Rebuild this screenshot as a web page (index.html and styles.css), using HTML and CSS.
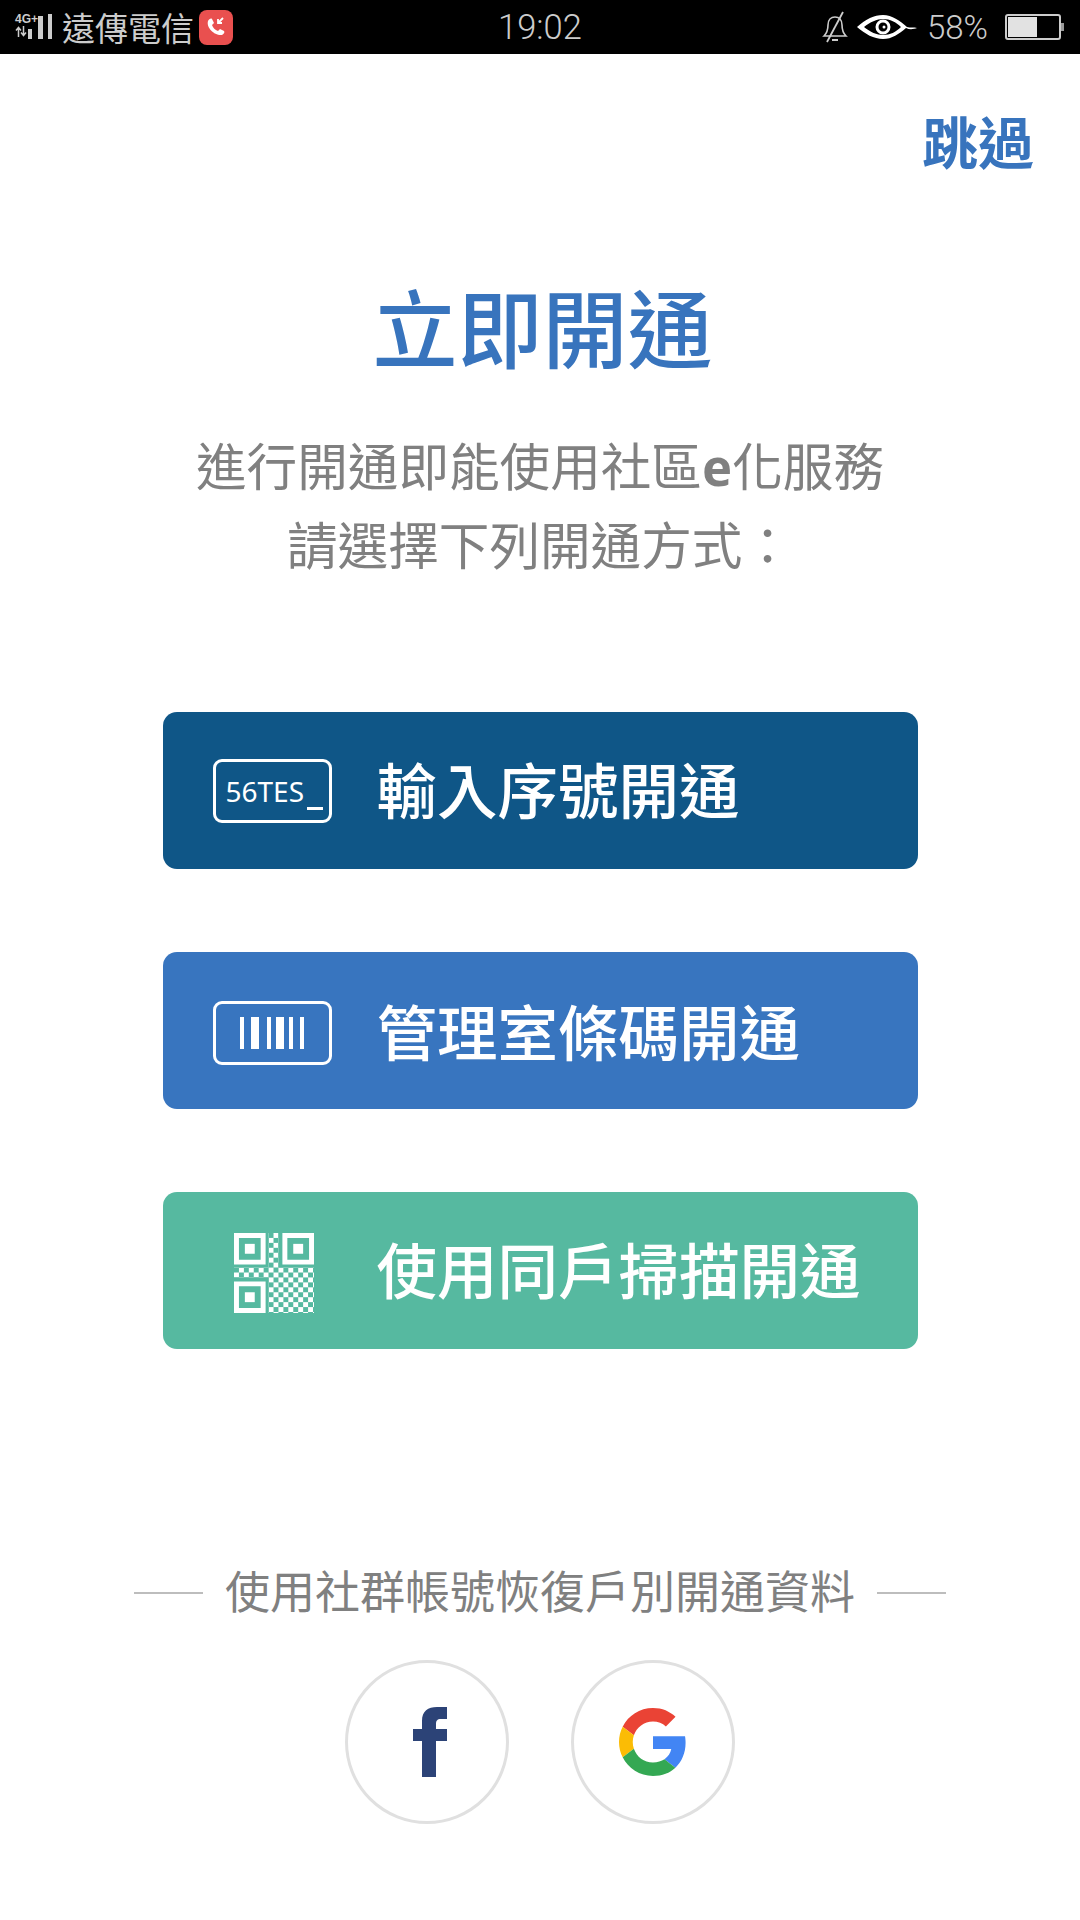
FILE: index.html
```html
<!DOCTYPE html>
<html lang="zh-Hant">
<head>
    <meta charset="UTF-8">
    <meta name="viewport" content="width=device-width, initial-scale=1.0">
    <title>立即開通</title>
    <link rel="stylesheet" href="styles.css">
</head>
<body>
    <div class="status-bar">
        <div class="status-left">
            <div class="signal">
                <div class="signal-type">
                    <span class="signal-4g">4G+</span>
                    <svg class="signal-arrows" width="12" height="11" viewBox="0 0 12 11"><path d="M3.500 11V2M1 4.500l2.500-3 2.500 3M8.500 0v9M6 6.500l2.500 3 2.500-3" fill="none" stroke="#ccc" stroke-width="1.500"/></svg>
                </div>
                <svg class="signal-bars" width="30" height="28" viewBox="0 0 30 28">
                    <rect x="1" y="16" width="4" height="10" fill="#ccc"/>
                    <rect x="11" y="3" width="5" height="23" fill="#ccc"/>
                    <rect x="21" y="1" width="4" height="25" fill="#ccc"/>
                </svg>
            </div>
            <span class="carrier">遠傳電信</span>
            <span class="call-badge">
                <svg width="28" height="28" viewBox="0 0 28 28">
                    <path d="M6 8c1-2 3-3 4-2l2 4-2 2c1 3 3 5 6 6l2-2 4 2c1 1 0 3-2 4-7 1-16-7-14-14z" fill="#fff"/>
                    <path d="M21 5l-5 5M16 6v4h4" fill="none" stroke="#fff" stroke-width="1.800"/>
                </svg>
            </span>
        </div>
        <div class="status-time">19:02</div>
        <div class="status-right">
            <svg class="bell" width="26" height="32" viewBox="0 0 26 32">
                <path d="M2 25c3-3 4-6 4-11 0-5 3-8 7-8s7 3 7 8c0 5 1 8 4 11z" fill="none" stroke="#ccc" stroke-width="1.600"/>
                <path d="M10 29h6" stroke="#ccc" stroke-width="2"/>
                <path d="M21 1L5 31" stroke="#ccc" stroke-width="1.800"/>
            </svg>
            <svg class="eye" width="62" height="28" viewBox="0 0 62 28">
                <path d="M1 14C10 6 18 2 27 2c9 0 17 6 24 12 3 1 7 0 10 1-3 1-7 2-11 0-7 6-14 11-23 11C18 26 9 21 1 14zM8 14c6 5 13 8 19 8 7 0 13-3 18-8-5-5-11-8-18-8-6 0-13 3-19 8z" fill="#fff" fill-rule="evenodd"/>
                <circle cx="27" cy="14" r="6" fill="none" stroke="#fff" stroke-width="3"/>
                <circle cx="28" cy="14" r="1.500" fill="#fff"/>
            </svg>
            <span class="battery-text">58%</span>
            <div class="battery">
                <div class="battery-body"><div class="battery-fill"></div></div>
                <div class="battery-tip"></div>
            </div>
        </div>
    </div>

    <div class="page">
        <div class="skip">跳過</div>
        <h1 class="title">立即開通</h1>
        <p class="intro">進行開通即能使用社區<b>e</b>化服務<br>請選擇下列開通方式：</p>

        <div class="options">
            <div class="option option-serial">
                <div class="option-icon">
                    <div class="code-box"><span class="code-text">56TES</span><span class="code-cursor"></span></div>
                </div>
                <span class="option-label">輸入序號開通</span>
            </div>
            <div class="option option-barcode">
                <div class="option-icon">
                    <div class="code-box code-box-bar">
                        <svg width="65" height="32" viewBox="0 0 65 32" fill="#fff">
                            <rect x="0" y="0" width="4" height="32"/>
                            <rect x="11" y="0" width="8" height="32"/>
                            <rect x="27" y="0" width="4" height="32"/>
                            <rect x="36" y="0" width="8" height="32"/>
                            <rect x="49" y="0" width="4" height="32"/>
                            <rect x="60" y="0" width="4" height="32"/>
                        </svg>
                    </div>
                </div>
                <span class="option-label">管理室條碼開通</span>
            </div>
            <div class="option option-qr">
                <div class="option-icon option-icon-qr">
                    <svg width="80" height="80" viewBox="0 0 81 81">
                        <defs>
                            <pattern id="dots" width="10" height="10" patternUnits="userSpaceOnUse">
                                <rect width="5" height="5" fill="#fff"/>
                                <rect x="5" y="5" width="5" height="5" fill="#fff"/>
                            </pattern>
                        </defs>
                        <path d="M0 0h32v32H0zM5 5v22h22V5zM49 0h32v32H49zM54 5v22h22V5zM0 49h32v32H0zM5 54v22h22V54z" fill="#fff" fill-rule="evenodd"/>
                        <rect x="11" y="11" width="10" height="10" fill="#fff"/>
                        <rect x="60" y="11" width="10" height="10" fill="#fff"/>
                        <rect x="11" y="60" width="10" height="10" fill="#fff"/>
                        <rect x="35" y="0" width="10" height="35" fill="url(#dots)"/>
                        <rect x="0" y="35" width="35" height="10" fill="url(#dots)"/>
                        <rect x="35" y="35" width="46" height="46" fill="url(#dots)"/>
                    </svg>
                </div>
                <span class="option-label">使用同戶掃描開通</span>
            </div>
        </div>

        <div class="social-title">
            <span class="social-line"></span>
            <span>使用社群帳號恢復戶別開通資料</span>
            <span class="social-line"></span>
        </div>
        <div class="social-buttons">
            <div class="social-btn social-fb">
                <svg width="34" height="70" viewBox="0 0 34 70">
                    <path d="M9 70V34H0V22h9v-8C9 4 15 0 24 0h10v12h-6c-4 0-5 2-5 5v5h11v12H23v36z" fill="#2c4377"/>
                </svg>
            </div>
            <div class="social-btn">
                <svg width="68" height="68" viewBox="0 0 48 48">
                    <path fill="#ea4335" d="M24 9.500c3.500 0 6.700 1.300 9.100 3.500l6.800-6.800C35.900 2.400 30.500 0 24 0 14.600 0 6.500 5.400 2.600 13.200l7.900 6.100C12.400 13.700 17.700 9.500 24 9.500z"/>
                    <path fill="#4285f4" d="M47 24.500c0-1.700-.2-3.300-.4-4.500H24v9h12.900c-.6 3-2.200 5.400-4.800 7.100l7.700 6C44.300 37.900 47 31.800 47 24.500z"/>
                    <path fill="#fbbc05" d="M10.500 28.700c-.5-1.400-.8-3-.8-4.700s.3-3.300.8-4.700l-7.900-6.100C.9 16.500 0 20.100 0 24s.9 7.500 2.600 10.800z"/>
                    <path fill="#34a853" d="M24 48c6.500 0 11.900-2.100 15.800-5.800l-7.700-6c-2.100 1.400-4.900 2.300-8.100 2.300-6.300 0-11.600-4.200-13.500-9.800l-7.900 6.100C6.500 42.600 14.600 48 24 48z"/>
                </svg>
            </div>
        </div>
    </div>
</body>
</html>
```

FILE: styles.css
```css
html, body {
    margin: 0;
    padding: 0;
}
body {
    width: 1080px;
    height: 1920px;
    overflow: hidden;
    background-color: #fff;
    font-family: "Noto Sans CJK TC", "Noto Sans", sans-serif;
}

/* status bar */
.status-bar {
    height: 54px;
    background-color: #000;
    color: #ccc;
    display: grid;
    grid-template-columns: 1fr auto 1fr;
    align-items: center;
}
.status-left {
    display: flex;
    align-items: center;
    padding-left: 15px;
}
.signal {
    display: flex;
    align-items: flex-start;
    width: 47px;
    height: 28px;
}
.signal-type {
    width: 12px;
    height: 28px;
}
.signal-4g {
    display: block;
    font: bold 12px/13px "Liberation Sans", sans-serif;
    color: #ccc;
    white-space: nowrap;
    width: 28px;
}
.signal-arrows {
    display: block;
}
.signal-bars {
    flex-shrink: 0;
}
.carrier {
    font-size: 33px;
    line-height: 40px;
}
.call-badge {
    width: 34px;
    height: 35px;
    margin-left: 5px;
    background-color: #e9504f;
    border-radius: 8px;
    display: flex;
    align-items: center;
    justify-content: center;
}
.status-time {
    font-family: Roboto, sans-serif;
    font-size: 34.500px;
    font-weight: 300;
}
.status-right {
    display: flex;
    align-items: center;
    justify-content: flex-end;
    padding-right: 16px;
}
.eye {
    margin-left: 8px;
}
.battery-text {
    font-family: Roboto, sans-serif;
    font-size: 33px;
    font-weight: 300;
    margin-left: 9px;
}
.battery {
    display: flex;
    align-items: center;
    margin-left: 17px;
}
.battery-body {
    width: 56px;
    height: 26px;
    box-sizing: border-box;
    border: 2px solid #ccc;
    border-radius: 3px;
    padding: 1px;
}
.battery-fill {
    width: 58%;
    height: 100%;
    background-color: #e2e2e2;
}
.battery-tip {
    width: 3px;
    height: 8px;
    background-color: #999;
}

/* content */
.page {
    display: flex;
    flex-direction: column;
    align-items: center;
}
.skip {
    align-self: flex-end;
    margin: 51px 46px 0 0;
    font-size: 56px;
    line-height: 70px;
    font-weight: bold;
    color: #3874bd;
}
.title {
    margin: 95px 0 0 5px;
    font-size: 85px;
    line-height: 110px;
    font-weight: 500;
    color: #3874bd;
}
.intro {
    margin: 46px 0 0;
    font-size: 50.600px;
    line-height: 76px;
    color: #808080;
    text-align: center;
}
.intro b {
    font-family: "Noto Sans", sans-serif;
}

.options {
    margin-top: 131px;
    display: flex;
    flex-direction: column;
    gap: 83px;
}
.option {
    width: 755px;
    height: 157px;
    box-sizing: border-box;
    border-radius: 14px;
    display: flex;
    align-items: center;
    color: #fff;
}
.option-serial {
    background-color: #0f5687;
}
.option-barcode {
    background-color: #3875bf;
    padding-top: 4px;
}
.option-qr {
    background-color: #56b9a0;
}
.option-icon {
    width: 119px;
    margin-left: 50px;
    margin-right: 45px;
    display: flex;
    justify-content: center;
}
.option-icon-qr {
    padding-top: 4px;
    padding-left: 3px;
    box-sizing: border-box;
}
.option-label {
    font-size: 60.500px;
    font-weight: 500;
    white-space: nowrap;
    padding-bottom: 6px;
}
.code-box {
    width: 119px;
    height: 64px;
    box-sizing: border-box;
    border: 3.500px solid #fff;
    border-radius: 9px;
    position: relative;
    display: flex;
    align-items: center;
    padding-left: 10px;
}
.code-box-bar {
    padding-left: 0;
    justify-content: center;
}
.code-text {
    font-family: "Noto Sans", sans-serif;
    font-size: 28px;
    line-height: 1;
}
.code-cursor {
    position: absolute;
    right: 6px;
    bottom: 10px;
    width: 16px;
    height: 3px;
    background-color: #fff;
}

.social-title {
    margin-top: 211px;
    display: flex;
    align-items: center;
    gap: 22px;
    font-size: 45px;
    line-height: 60px;
    color: #808080;
}
.social-line {
    width: 69px;
    height: 2px;
    margin-top: 5px;
    background-color: #bdbdbd;
}
.social-buttons {
    margin-top: 40px;
    display: flex;
    gap: 62px;
}
.social-btn {
    width: 164px;
    height: 164px;
    box-sizing: border-box;
    border: 3.500px solid #e0e0e0;
    border-radius: 50%;
    display: flex;
    align-items: center;
    justify-content: center;
}
.social-fb {
    padding-left: 5px;
}
```
